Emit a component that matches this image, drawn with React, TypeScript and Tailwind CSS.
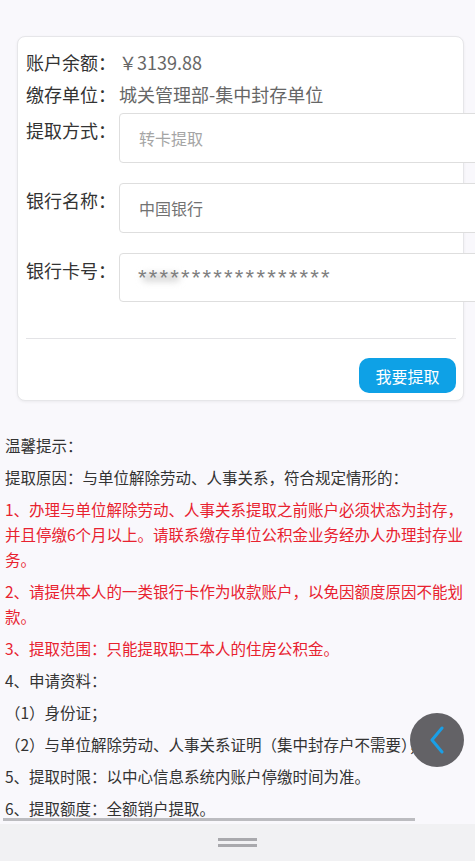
import React from "react";

const cjk = { fontFamily: '"Noto Sans CJK SC", "Noto Sans", sans-serif' };

function InfoRow({ label, value }: { label: string; value: string }) {
  return (
    <div className="flex text-[18px] leading-[32px]">
      <span className="w-[93px] shrink-0 text-[#333]">{label}</span>
      <span className="text-[#666]">{value}</span>
    </div>
  );
}

function FieldRow({
  label,
  className,
  children,
}: {
  label: string;
  className?: string;
  children: React.ReactNode;
}) {
  return (
    <div className={"flex items-start " + (className ?? "")}>
      <span className="w-[93px] shrink-0 text-[18px] leading-[34px] text-[#333]">{label}</span>
      {children}
    </div>
  );
}

const notes: { text: string; red?: boolean }[] = [
  { text: "温馨提示：" },
  { text: "提取原因：与单位解除劳动、人事关系，符合规定情形的：" },
  {
    text: "1、办理与单位解除劳动、人事关系提取之前账户必须状态为封存，并且停缴6个月以上。请联系缴存单位公积金业务经办人办理封存业务。",
    red: true,
  },
  { text: "2、请提供本人的一类银行卡作为收款账户，以免因额度原因不能划款。", red: true },
  { text: "3、提取范围：只能提取职工本人的住房公积金。", red: true },
  { text: "4、申请资料：" },
  { text: "（1）身份证；" },
  { text: "（2）与单位解除劳动、人事关系证明（集中封存户不需要）；" },
  { text: "5、提取时限：以中心信息系统内账户停缴时间为准。" },
  { text: "6、提取额度：全额销户提取。" },
];

export default function App() {
  return (
    <div style={cjk} className="relative flex h-[861px] w-full flex-col overflow-hidden bg-[#f9f8fc]">
      <div className="min-h-0 flex-1 overflow-hidden">
        {/* Account card */}
        <div className="ml-[17px] mt-[36px] w-[447px] rounded-lg border border-[#e6e6e9] bg-white pb-[7px] pl-[8px] pr-[7px] pt-[9px] shadow-[0_1px_3px_rgba(0,0,0,0.06)]">
          <InfoRow label="账户余额：" value="￥3139.88" />
          <InfoRow label="缴存单位：" value="城关管理部-集中封存单位" />

          <FieldRow label="提取方式：" className="mt-[3px]">
            <div className="flex h-[50px] w-[380px] shrink-0 items-center rounded border border-[#dedede] bg-white pl-[19px] text-[16px] text-[#a5a5a5]">
              转卡提取
            </div>
          </FieldRow>
          <FieldRow label="银行名称：" className="mt-[20px]">
            <div className="flex h-[50px] w-[380px] shrink-0 items-center rounded border border-[#dedede] bg-white pl-[19px] text-[16px] text-[#727272]">
              中国银行
            </div>
          </FieldRow>
          <FieldRow label="银行卡号：" className="mt-[20px]">
            <div className="relative flex h-[49px] w-[380px] shrink-0 items-center rounded border border-[#dedede] bg-white pl-[18px]">
              <span className="absolute left-[22px] top-[19px] h-[9px] w-[38px] rounded-full bg-[#dcdcdc] blur-[3px]" />
              <span
                className="relative text-[22px] leading-[24px] tracking-[2.2px] text-[#7e7e7e]"
                style={{ fontFamily: '"Liberation Sans", Arial, sans-serif' }}
              >
                ******************
              </span>
            </div>
          </FieldRow>

          <div className="mt-[36px] h-px bg-[#e3e3e6]" />
          <div className="mt-[19px] flex justify-end">
            <button className="h-[35px] w-[97px] rounded-[10px] bg-[#0ea1e6] text-[16px] text-white">
              我要提取
            </button>
          </div>
        </div>

        {/* Tips */}
        <div className="mt-[32px] px-[5px] text-[15.5px] leading-[25px] text-[#333]">
          {notes.map((n, i) => (
            <p key={i} className={"mb-[7px] " + (n.red ? "text-[#e8222f]" : "")}>
              {n.text}
            </p>
          ))}
        </div>
      </div>

      {/* horizontal scroll indicator */}
      <div className="ml-[3px] h-[3px] w-[412px] shrink-0 bg-[#bcbcc0]" />

      {/* bottom bar */}
      <div className="mt-[3px] flex h-[37px] shrink-0 flex-col items-center justify-center gap-[3px] bg-[#f1f1f3]">
        <div className="h-[3px] w-[39px] bg-[#a9a9ad]" />
        <div className="h-[3px] w-[39px] bg-[#a9a9ad]" />
      </div>

      {/* floating back button */}
      <button className="absolute left-[410px] top-[713px] flex h-[54px] w-[54px] items-center justify-center rounded-full bg-[#636266]">
        <svg width="16" height="28" viewBox="0 0 16 28" fill="none">
          <polyline
            points="13,2 3,14 13,26"
            stroke="#1a9fe6"
            strokeWidth="3"
            strokeLinecap="round"
            strokeLinejoin="round"
          />
        </svg>
      </button>
    </div>
  );
}
